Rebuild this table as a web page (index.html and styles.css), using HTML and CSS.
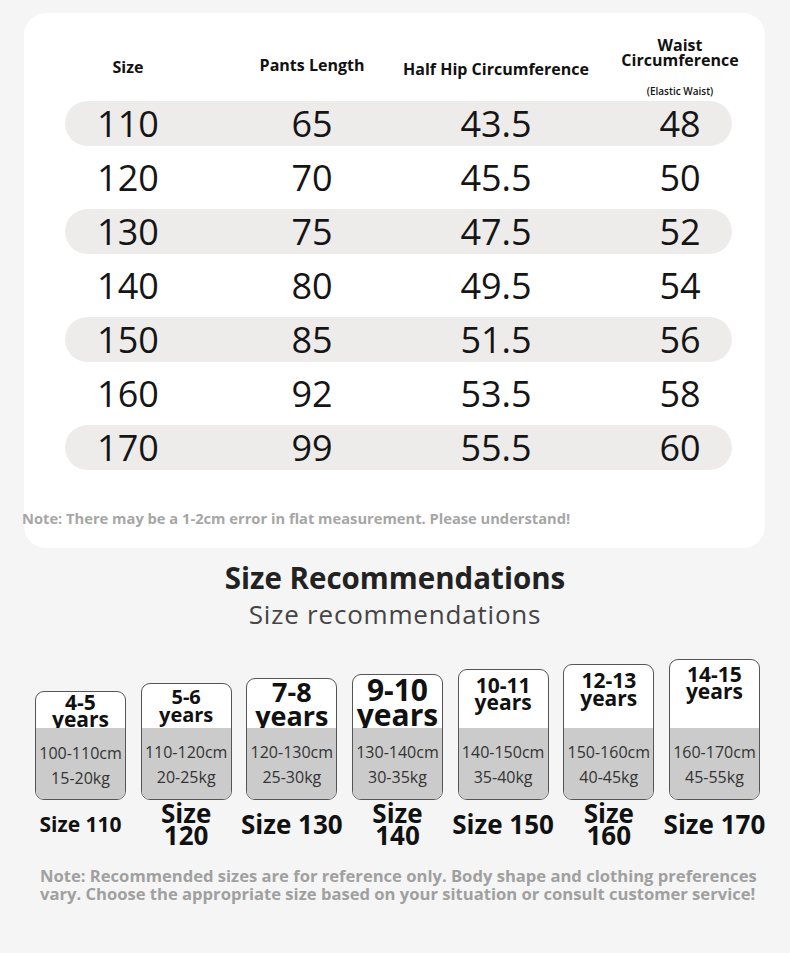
FILE: index.html
```html
<!DOCTYPE html>
<html lang="en">
<head>
<meta charset="utf-8">
<title>Size Chart</title>
<link rel="stylesheet" href="styles.css">
</head>
<body>
<main class="page">
  <section class="card">
    <div class="grid thead">
      <div class="cell th th-size">Size</div>
      <div class="cell th th-length">Pants Length</div>
      <div class="cell th th-hip">Half Hip Circumference</div>
      <div class="cell th th-waist">
        <div class="th-waist-title">Waist<br>Circumference</div>
        <div class="th-waist-sub">(Elastic Waist)</div>
      </div>
    </div>
    <div class="rows">
      <div class="grid row shaded"><div class="cell">110</div><div class="cell">65</div><div class="cell">43.5</div><div class="cell">48</div></div>
      <div class="grid row"><div class="cell">120</div><div class="cell">70</div><div class="cell">45.5</div><div class="cell">50</div></div>
      <div class="grid row shaded"><div class="cell">130</div><div class="cell">75</div><div class="cell">47.5</div><div class="cell">52</div></div>
      <div class="grid row"><div class="cell">140</div><div class="cell">80</div><div class="cell">49.5</div><div class="cell">54</div></div>
      <div class="grid row shaded"><div class="cell">150</div><div class="cell">85</div><div class="cell">51.5</div><div class="cell">56</div></div>
      <div class="grid row"><div class="cell">160</div><div class="cell">92</div><div class="cell">53.5</div><div class="cell">58</div></div>
      <div class="grid row shaded"><div class="cell">170</div><div class="cell">99</div><div class="cell">55.5</div><div class="cell">60</div></div>
    </div>
    <p class="card-note">Note: There may be a 1-2cm error in flat measurement. Please understand!</p>
  </section>

  <h2 class="rec-title">Size Recommendations</h2>
  <p class="rec-sub">Size recommendations</p>

  <div class="boxes">
    <div class="item">
      <div class="box box-1">
        <div class="age age-1"><span>4-5</span><span>years</span></div>
        <div class="stats"><span>100-110cm</span><span>15-20kg</span></div>
      </div>
      <div class="size-label size-small">Size 110</div>
    </div>
    <div class="item">
      <div class="box box-2">
        <div class="age age-2"><span>5-6</span><span>years</span></div>
        <div class="stats"><span>110-120cm</span><span>20-25kg</span></div>
      </div>
      <div class="size-label size-stack"><span>Size</span><span>120</span></div>
    </div>
    <div class="item">
      <div class="box box-3">
        <div class="age age-3"><span>7-8</span><span>years</span></div>
        <div class="stats"><span>120-130cm</span><span>25-30kg</span></div>
      </div>
      <div class="size-label">Size 130</div>
    </div>
    <div class="item">
      <div class="box box-4">
        <div class="age age-4"><span>9-10</span><span>years</span></div>
        <div class="stats"><span>130-140cm</span><span>30-35kg</span></div>
      </div>
      <div class="size-label size-stack"><span>Size</span><span>140</span></div>
    </div>
    <div class="item">
      <div class="box box-5">
        <div class="age age-5"><span>10-11</span><span>years</span></div>
        <div class="stats"><span>140-150cm</span><span>35-40kg</span></div>
      </div>
      <div class="size-label">Size 150</div>
    </div>
    <div class="item">
      <div class="box box-6">
        <div class="age age-6"><span>12-13</span><span>years</span></div>
        <div class="stats"><span>150-160cm</span><span>40-45kg</span></div>
      </div>
      <div class="size-label size-stack"><span>Size</span><span>160</span></div>
    </div>
    <div class="item">
      <div class="box box-7">
        <div class="age age-7"><span>14-15</span><span>years</span></div>
        <div class="stats"><span>160-170cm</span><span>45-55kg</span></div>
      </div>
      <div class="size-label">Size 170</div>
    </div>
  </div>

  <p class="bottom-note">Note: Recommended sizes are for reference only. Body shape and clothing preferences vary. Choose the appropriate size based on your situation or consult customer service!</p>
</main>
</body>
</html>
```

FILE: styles.css
```css
* { box-sizing: border-box; }

html, body {
  margin: 0;
  padding: 0;
  background: #f5f5f5;
}

body {
  font-family: "Open Sans", "Noto Sans", sans-serif;
  color: #111;
  width: 790px;
  height: 953px;
  overflow: hidden;
}

.page {
  padding-top: 13px;
}

/* ---------- card with table ---------- */
.card {
  margin: 0 25px 0 24px;
  height: 535px;
  background: #ffffff;
  border-radius: 22px;
  padding: 0 33px 0 41px;
}

.grid {
  display: grid;
  grid-template-columns: repeat(4, 100px);
  column-gap: 84px;
  padding-left: 13px;
}

.cell {
  display: flex;
  justify-content: center;
  white-space: nowrap;
}

.thead {
  height: 88px;
}

.th {
  font-weight: 700;
  font-size: 16px;
  line-height: 20px;
  color: #111;
  align-items: flex-start;
}

.th-size { padding-top: 44px; }
.th-length { padding-top: 42px; }
.th-hip { padding-top: 46px; }

.th-waist {
  flex-direction: column;
  align-items: center;
  padding-top: 21px;
}

.th-waist-title {
  text-align: center;
  line-height: 15px;
}

.th-waist-sub {
  font-size: 10px;
  line-height: 14px;
  font-weight: 600;
  margin-top: 16px;
}

.rows {
  display: flex;
  flex-direction: column;
  gap: 9px;
}

.row {
  height: 45px;
  border-radius: 23px;
  align-items: center;
  font-size: 36px;
  line-height: 45px;
  font-weight: 400;
  color: #151515;
}

.row.shaded {
  background: #eeebeb;
}

.card-note {
  margin: 38px 0 0 -43px;
  font-size: 14.7px;
  line-height: 20px;
  font-weight: 700;
  color: #a6a6a6;
  white-space: nowrap;
}

/* ---------- recommendations ---------- */
.rec-title {
  margin: 12px 0 0;
  text-align: center;
  font-size: 29.5px;
  line-height: 36px;
  font-weight: 700;
  color: #222;
}

.rec-sub {
  margin: 3px 0 0;
  text-align: center;
  font-size: 26px;
  line-height: 30px;
  font-weight: 400;
  color: #444;
  letter-spacing: 0.8px;
}

.boxes {
  display: flex;
  align-items: flex-end;
  gap: 14.67px;
  padding-left: 35px;
  margin-top: 30px;
}

.item {
  width: 91px;
  display: flex;
  flex-direction: column;
}

.box {
  display: flex;
  flex-direction: column;
  border: 1.5px solid #555;
  border-radius: 9px;
  background: #fff;
}

.box-1 { height: 109px; }
.box-2 { height: 117px; }
.box-3 { height: 122px; }
.box-4 { height: 126px; }
.box-5 { height: 131px; }
.box-6 { height: 136px; }
.box-7 { height: 141px; }

.age {
  flex: 1;
  display: flex;
  flex-direction: column;
  align-items: center;
  font-weight: 700;
  color: #111;
  white-space: nowrap;
  border-radius: 8px 8px 0 0;
}

.age-1 { font-size: 21px; line-height: 17px; padding-top: 2px; }
.age-2 { font-size: 20px; line-height: 18px; padding-top: 3.5px; }
.age-3 { font-size: 27px; line-height: 24px; padding-top: 0.5px; }
.age-4 { font-size: 30px; line-height: 25px; padding-top: 2px; }
.age-5 { font-size: 21px; line-height: 17px; padding-top: 7px; }
.age-6 { font-size: 21px; line-height: 18px; padding-top: 5.5px; }
.age-7 { font-size: 21px; line-height: 17px; padding-top: 6px; }

.stats {
  height: 71.5px;
  background: #cbcbcb;
  border-radius: 0 0 7.5px 7.5px;
  display: flex;
  flex-direction: column;
  align-items: center;
  padding-top: 12.5px;
  font-size: 16px;
  line-height: 25px;
  color: #333;
  white-space: nowrap;
}

.size-label {
  height: 48px;
  display: flex;
  flex-direction: column;
  align-items: center;
  justify-content: center;
  text-align: center;
  font-weight: 700;
  font-size: 26px;
  line-height: 22px;
  color: #111;
  white-space: nowrap;
}

.size-small { font-size: 21px; }
.size-stack { font-size: 26px; }

.bottom-note {
  margin: 19px 0 0 40px;
  width: 730px;
  font-size: 16.6px;
  line-height: 18px;
  font-weight: 700;
  color: #a0a0a0;
}
```
